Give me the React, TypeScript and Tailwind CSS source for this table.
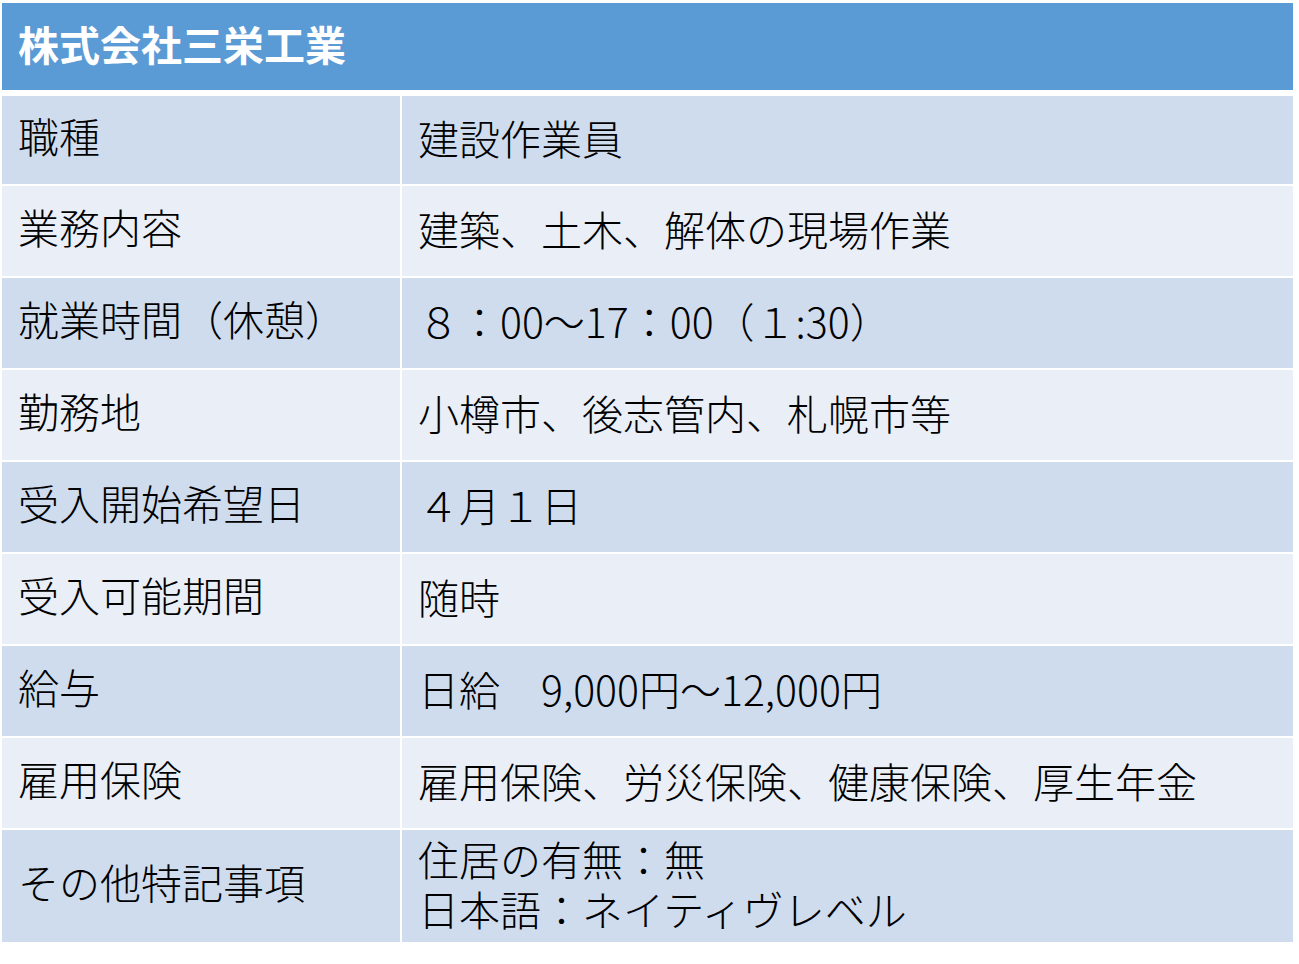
const rows: { label: string; value: string[] }[] = [
  { label: "職種", value: ["建設作業員"] },
  { label: "業務内容", value: ["建築、土木、解体の現場作業"] },
  { label: "就業時間（休憩）", value: ["８：00～17：00（１:30）"] },
  { label: "勤務地", value: ["小樽市、後志管内、札幌市等"] },
  { label: "受入開始希望日", value: ["４月１日"] },
  { label: "受入可能期間", value: ["随時"] },
  { label: "給与", value: ["日給　9,000円～12,000円"] },
  { label: "雇用保険", value: ["雇用保険、労災保険、健康保険、厚生年金"] },
  { label: "その他特記事項", value: ["住居の有無：無", "日本語：ネイティヴレベル"] },
];

export default function App() {
  return (
    <div className="min-h-[964px] bg-white pl-[2px] pt-[3px] font-['Noto_Sans_CJK_JP','Noto_Sans',sans-serif] text-[41px] text-black">
      <div className="w-[1291px]">
        <div className="flex h-[87px] items-center bg-[#5b9bd5] px-[16px] pb-[6px] font-bold text-white">
          株式会社三栄工業
        </div>
        <div className="mt-[6px] grid grid-cols-[398px_1fr] gap-x-[2px] gap-y-[2px]">
          {rows.map((r, i) => {
            const bg = i % 2 === 0 ? "bg-[#cfdcee]" : "bg-[#e9eef7]";
            const h = i === 0 ? "h-[88px]" : i === rows.length - 1 ? "h-[112px]" : "h-[90px]";
            return (
              <div key={r.label} className="contents">
                <div className={`${bg} ${h} flex items-center px-[16px] pb-[8px] font-light`}>{r.label}</div>
                <div className={`${bg} ${h} flex flex-col justify-center px-[16px] pb-[6px] font-light leading-[50px]`}>
                  {r.value.map((v) => (
                    <div key={v}>{v}</div>
                  ))}
                </div>
              </div>
            );
          })}
        </div>
      </div>
    </div>
  );
}
